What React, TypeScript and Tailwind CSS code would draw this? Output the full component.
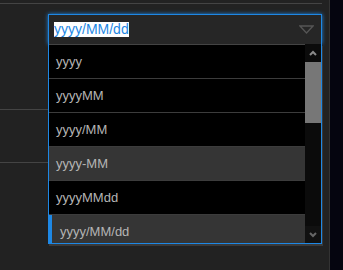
import React from "react";

const formats = ["yyyy", "yyyyMM", "yyyy/MM", "yyyy-MM", "yyyyMMdd", "yyyy/MM/dd"];

const font = { fontFamily: '"Liberation Sans", Arial, sans-serif' };

const Caret = () => (
  <svg width="15" height="9" viewBox="0 0 15 9" className="mr-[7px]">
    <polygon points="1,1 14,1 7.5,8" fill="none" stroke="#555" strokeWidth="1.3" />
  </svg>
);

const Chevron = ({ up, color }: { up?: boolean; color: string }) => (
  <svg width="8" height="6" viewBox="0 0 8 6">
    <polyline
      points={up ? "1,5 4,2 7,5" : "1,1 4,4 7,1"}
      fill="none"
      stroke={color}
      strokeWidth="2"
    />
  </svg>
);

const Scrollbar = () => (
  <div className="w-[16px] bg-[#0b0b0b] flex flex-col">
    <div className="h-[18px] flex items-center justify-center">
      <Chevron up color="#8a8a8a" />
    </div>
    <div className="h-[61px] bg-[#777]" />
    <div className="flex-1" />
    <div className="h-[17px] flex items-center justify-center bg-[#111]">
      <Chevron color="#666" />
    </div>
  </div>
);

const Option = ({ label, index }: { label: string; index: number }) => {
  const hover = index === 3;
  const active = index === 5;
  if (active) {
    return (
      <div className="h-[34px] shrink-0 -ml-px flex items-center pl-[8px] bg-[#353535] border-l-[4px] border-[#1e88e5] text-[13px] text-[#b4b4b4]">
        {label}
      </div>
    );
  }
  return (
    <div
      className={
        "h-[34px] shrink-0 flex items-center pl-[7px] border-b border-[#3c3c3c] text-[13px] text-[#b4b4b4] " +
        (hover ? "bg-[#353535]" : "bg-black")
      }
    >
      {label}
    </div>
  );
};

const DateFormatSelect = () => (
  <div className="relative w-[274px]">
    <div className="h-[30px] bg-[#262626] border-t border-x border-[#1e88e5] flex items-center justify-between pl-[5px] shadow-[0_0_4px_#1e88e5]">
      <span className="bg-white text-[#1e88e5] text-[14px] leading-[14px] pb-px">yyyy/MM/dd</span>
      <Caret />
    </div>
    <div className="absolute top-full left-0 w-[274px] h-[200px] flex border-x border-b border-[#1e88e5] bg-black shadow-[1px_2px_0_#3a3a3a] overflow-hidden">
      <div className="flex-1 flex flex-col border-t border-[#444] overflow-hidden">
        {formats.map((f, i) => (
          <Option key={f} label={f} index={i} />
        ))}
      </div>
      <Scrollbar />
    </div>
  </div>
);

export default function App() {
  return (
    <div className="w-[343px] h-[270px] bg-[#222] flex overflow-hidden" style={font}>
      <div className="w-[329px] flex flex-col">
        <div className="mt-[3px] h-px w-[322px] bg-[#444]" />
        <div className="h-[105px] pl-[48px] pt-[10px]">
          <DateFormatSelect />
        </div>
        <div className="h-px w-[48px] bg-[#444]" />
        <div className="h-[52px]" />
        <div className="h-px w-[48px] bg-[#444]" />
      </div>
      <div className="w-px bg-[#333]" />
      <div className="flex-1 bg-[#05050f]" />
    </div>
  );
}
